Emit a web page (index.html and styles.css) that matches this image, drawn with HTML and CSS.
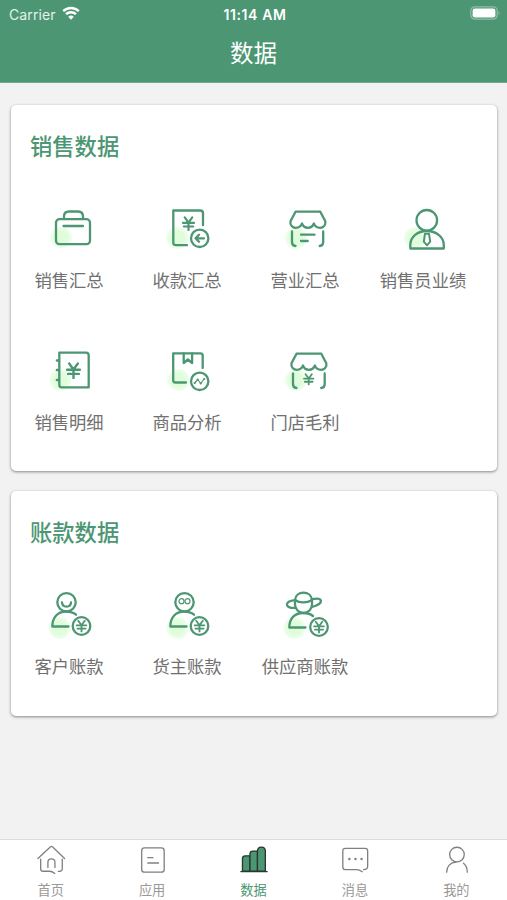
FILE: index.html
```html
<!DOCTYPE html>
<html lang="zh-CN">
<head>
    <meta charset="UTF-8">
    <meta name="viewport" content="width=device-width, initial-scale=1.0">
    <title>数据</title>
    <link rel="stylesheet" href="styles.css">
</head>
<body>
    <svg class="defs" width="0" height="0">
        <defs>
            <radialGradient id="glow">
                <stop offset="0.6" stop-color="#e0fddb"/>
                <stop offset="1" stop-color="#e9fee6" stop-opacity="0.7"/>
            </radialGradient>
            <symbol id="yen" viewBox="0 0 14 16">
                <path d="M3 1.5l4 5.5 4-5.5M1 7.3h12M2 11.2h10M7 7v8"/>
            </symbol>
        </defs>
    </svg>

    <div class="app">
        <header class="header">
            <div class="status-bar">
                <div class="carrier">
                    <span>Carrier</span>
                    <svg class="wifi" viewBox="0 0 18 14">
                        <path d="M1.2 5.2a11.2 11.2 0 0 1 15.6 0M4 8.2a7.2 7.2 0 0 1 10 0"/>
                        <path class="wifi-dot" d="M6.2 10.8a4 4 0 0 1 5.6 0L9 13.7z"/>
                    </svg>
                </div>
                <div class="time">11:14 AM</div>
                <div class="battery-wrap">
                    <svg class="battery" viewBox="0 0 31 14">
                        <rect class="battery-case" x="0.8" y="0.8" width="26.4" height="12.4" rx="4"/>
                        <rect x="2.6" y="2.6" width="22.8" height="8.8" rx="2.2" fill="#fff"/>
                        <path d="M28.6 5q2 2 0 4z" fill="#8fbfa8"/>
                    </svg>
                </div>
            </div>
            <h1 class="title">数据</h1>
        </header>

        <main class="content">
            <section class="card card-sales">
                <h2 class="card-title">销售数据</h2>
                <div class="grid">
                    <div class="item">
                        <svg class="icon" viewBox="0 0 48 48">
                            <circle class="glow" cx="16" cy="32.5" r="11"/>
                            <rect x="11" y="14.2" width="34" height="25" rx="3.5"/>
                            <path d="M19 13.500v-2q0-5 5-5h9q5 0 5 5v2M18.500 21H38"/>
                        </svg>
                        <span>销售汇总</span>
                    </div>
                    <div class="item">
                        <svg class="icon" viewBox="0 0 48 48">
                            <circle class="glow" cx="14.5" cy="33" r="11"/>
                            <path d="M24 40.2H13q-2.700 0-2.700-2.700V5.500h27q2.700 0 2.700 2.700v12"/>
                            <use href="#yen" x="18.500" y="11" width="14" height="15"/>
                            <circle cx="36.700" cy="33.300" r="8.700"/>
                            <path d="M41 33.300h-8.300M36 29.800l-3.500 3.500 3.500 3.500"/>
                        </svg>
                        <span>收款汇总</span>
                    </div>
                    <div class="item">
                        <svg class="icon" viewBox="0 0 48 48">
                            <circle class="glow" cx="15" cy="33" r="11"/>
                            <path d="M14.500 6.700h24.800l5 9.500c.8 4-2.200 6.600-5.200 6.600-3.200 0-5.500-2-6.200-4.300-1 2.600-3.200 4.300-6 4.300s-5-1.700-6-4.300c-.7 2.300-3 4.300-6.200 4.300-3 0-6-2.600-5.200-6.600z"/>
                            <path d="M11 26.500v10.500q0 3.700 3.500 4M42.200 26.500v10.500q0 3.700-3.500 4M20 29.700h13.500M20 36h6.700"/>
                        </svg>
                        <span>营业汇总</span>
                    </div>
                    <div class="item">
                        <svg class="icon" viewBox="0 0 48 48">
                            <circle class="glow" cx="16" cy="33" r="11"/>
                            <circle class="head" cx="27.800" cy="15.300" r="10.300"/>
                            <path d="M11.300 43.500V40c0-8.500 7.500-14 16.500-14s17 5.500 17 14v3.500z"/>
                            <path class="thin" d="M26 28.700h4l1.200 8-3.200 3.600-3.200-3.600z"/>
                        </svg>
                        <span>销售员业绩</span>
                    </div>
                    <div class="item">
                        <svg class="icon" viewBox="0 0 48 48">
                            <circle class="glow" cx="15.500" cy="33" r="11"/>
                            <path d="M14.300 5.700H41q2.700 0 2.700 2.700v32H17q-2.700 0-2.700-2.700zM11.800 13.500h2.500M11.800 23h2.500M11.800 33h2.500"/>
                            <use href="#yen" x="20.500" y="15" width="16" height="17"/>
                        </svg>
                        <span>销售明细</span>
                    </div>
                    <div class="item">
                        <svg class="icon" viewBox="0 0 48 48">
                            <circle class="glow" cx="15.300" cy="33" r="11"/>
                            <path d="M23 35.500H12.500q-2.300 0-2.300-2.300V6.300h27.200q2.300 0 2.300 2.300V21"/>
                            <path d="M20.700 6.500v9.500l4.200-3.500 4.200 3.500V6.500"/>
                            <circle cx="36.700" cy="34.300" r="8.700"/>
                            <path class="fine" d="M31.700 36l3-3.500 3 4 3.500-4.500"/>
                            <path class="fine dots" d="M31.700 36h0M34.700 32.500h0M37.700 36.500h0M41.200 32h0"/>
                        </svg>
                        <span>商品分析</span>
                    </div>
                    <div class="item">
                        <svg class="icon" viewBox="0 0 48 48">
                            <circle class="glow" cx="15" cy="33" r="11"/>
                            <path d="M15.500 6.700h24.800l5 9.500c.8 4-2.200 6.600-5.200 6.600-3.200 0-5.500-2-6.200-4.300-1 2.600-3.200 4.300-6 4.300s-5-1.700-6-4.300c-.7 2.300-3 4.300-6.200 4.300-3 0-6-2.600-5.200-6.600z"/>
                            <path d="M12 26.500v10.500q0 3.700 3.500 4M43.700 26.500v10.500q0 3.700-3.500 4"/>
                            <use href="#yen" x="21.700" y="26" width="12" height="12.500"/>
                        </svg>
                        <span>门店毛利</span>
                    </div>
                </div>
            </section>

            <section class="card card-account">
                <h2 class="card-title">账款数据</h2>
                <div class="grid">
                    <div class="item">
                        <svg class="icon" viewBox="0 0 48 48">
                            <circle class="glow" cx="14.500" cy="37" r="11"/>
                            <circle cx="21.500" cy="11.300" r="9.200"/>
                            <path d="M17 11.500c.5 5.500 8.500 5.500 9 0"/>
                            <path d="M23.500 35.500H7.300c0-9 5.200-14.800 13.700-14.800 4 0 7.500 1 10 3"/>
                            <circle cx="36.500" cy="35" r="8.800"/>
                            <use href="#yen" x="30.500" y="28.500" width="12" height="13"/>
                        </svg>
                        <span>客户账款</span>
                    </div>
                    <div class="item">
                        <svg class="icon" viewBox="0 0 48 48">
                            <circle class="glow" cx="14.500" cy="37" r="11"/>
                            <circle cx="21.500" cy="11.300" r="9.200"/>
                            <circle class="fine" cx="18.500" cy="10.200" r="2.500"/>
                            <circle class="fine" cx="24.500" cy="10.200" r="2.500"/>
                            <path d="M23.500 35.500H7.300c0-9 5.200-14.800 13.700-14.800 4 0 7.500 1 10 3"/>
                            <circle cx="36.500" cy="35" r="8.800"/>
                            <use href="#yen" x="30.500" y="28.500" width="12" height="13"/>
                        </svg>
                        <span>货主账款</span>
                    </div>
                    <div class="item">
                        <svg class="icon" viewBox="0 0 48 48">
                            <circle class="glow" cx="13.500" cy="37" r="11"/>
                            <path d="M14 9c.5-4.700 4-7.300 8.500-7.300s8 2.600 8.500 7.300"/>
                            <path d="M14 9.200c-5 .5-8 2-8 4.300 0 2.500 4 4 8.500 3.200M31 8.200c5-1 8.500-.5 8.900 1.500.4 2.200-3.500 4.800-8.900 6.300"/>
                            <path d="M14 9v4.500a8.500 8.500 0 0 0 17 0V9c-5 3-12 3.500-17 0"/>
                            <path d="M24.500 36.500H8.300c0-9 5.200-14.500 13.700-14.500 4 0 7.500 1 10 3"/>
                            <circle cx="38" cy="36" r="8.800"/>
                            <use href="#yen" x="32" y="29.500" width="12" height="13"/>
                        </svg>
                        <span>供应商账款</span>
                    </div>
                </div>
            </section>
        </main>

        <nav class="tab-bar">
            <div class="tab">
                <svg class="tab-icon" viewBox="0 0 32 32">
                    <path d="M2 14.500L15.500 1.800q1-.8 2 0L30.500 14.500M5 15v10.500q0 2.500 2.500 2.500h7q2.500 0 5.500 2.300M28 15v10.500q0 2.500-4.200 2.700M12.700 24v-5.500c0-5 7.500-5 7.500 0V24"/>
                </svg>
                <span>首页</span>
            </div>
            <div class="tab">
                <svg class="tab-icon" viewBox="0 0 32 32">
                    <rect x="5" y="3" width="24" height="26" rx="3"/>
                    <path d="M11.500 13.500H17M11.500 19.200H23"/>
                </svg>
                <span>应用</span>
            </div>
            <div class="tab active">
                <svg class="tab-icon bars" viewBox="0 0 32 32">
                    <path d="M3.700 28V14.500q0-3 3-3h5V28z"/>
                    <path d="M11.700 28V9.500q0-3 3-3h5V28z"/>
                    <path d="M19.700 28V6.500q0-4.300 4.200-4.300t4.200 4.300V28z"/>
                    <path d="M2 28.300h28"/>
                </svg>
                <span>数据</span>
            </div>
            <div class="tab">
                <svg class="tab-icon" viewBox="0 0 32 32">
                    <path d="M25 26.200q4.500 0 4.500-3.200V6.300q0-2.700-2.700-2.700H5.700Q3 3.600 3 6.300v17.200q0 2.700 2.700 2.700h12q2.800 0 6 2.300"/>
                    <path class="dots" d="M10 15h0M16.500 15h0M23 15h0"/>
                </svg>
                <span>消息</span>
            </div>
            <div class="tab">
                <svg class="tab-icon" viewBox="0 0 32 32">
                    <circle cx="17" cy="10.200" r="7.800"/>
                    <path d="M6 29c0-6 4-10.500 10-10.700M24 19.400c2.500 2 4 5.300 4 9.600"/>
                </svg>
                <span>我的</span>
            </div>
        </nav>
    </div>
</body>
</html>
```
FILE: styles.css
```css
* {
    box-sizing: border-box;
}

body {
    margin: 0;
    font-family: Inter, "Noto Sans CJK SC", sans-serif;
    background: #f2f2f2;
    color: #707070;
}

.defs {
    display: block;
}

.app {
    height: 900px;
    display: flex;
    flex-direction: column;
}

.header {
    height: 83px;
    background: #4c9673;
    border-bottom: 1px solid #76a890;
    color: #fff;
}

.status-bar {
    height: 28px;
    padding: 0 6px 0 9px;
    display: grid;
    grid-template-columns: 1fr auto 1fr;
    align-items: center;
    font-size: 14px;
}

.carrier {
    display: flex;
    align-items: center;
    gap: 6px;
    color: #e3f1ea;
    letter-spacing: 0.1px;
}

.wifi {
    width: 18px;
    height: 14px;
    margin-top: -2px;
    fill: none;
    stroke: #fff;
    stroke-width: 2.4;
}

.wifi .wifi-dot {
    fill: #fff;
    stroke: none;
}

.time {
    font-size: 14px;
    font-weight: 600;
    letter-spacing: 0.6px;
}

.battery-wrap {
    display: flex;
    justify-content: flex-end;
}

.battery {
    width: 31px;
    height: 14px;
    margin-top: -2px;
}

.battery-case {
    fill: none;
    stroke: #8fbfa8;
    stroke-width: 1.2;
}

.title {
    margin: 8px 0 0;
    font-size: 23.5px;
    line-height: 36px;
    font-weight: 400;
    text-align: center;
}

.content {
    flex: 1;
    padding: 22px 10px 0 11px;
}

.card {
    margin-bottom: 20px;
    padding-top: 26px;
    background: #fff;
    border-radius: 5px;
    box-shadow: 0 1px 3px rgba(0, 0, 0, 0.45);
}

.card-sales {
    height: 366px;
}

.card-account {
    height: 225px;
}

.card-title {
    margin: 0 0 0 19px;
    font-size: 22.3px;
    line-height: 32px;
    font-weight: 500;
    color: #4c9673;
}

.grid {
    display: grid;
    grid-template-columns: repeat(4, 118px);
    grid-auto-rows: 142px;
    margin-left: -1px;
    padding-top: 42px;
}

.item {
    display: flex;
    flex-direction: column;
    align-items: center;
    font-size: 17.3px;
    line-height: 26px;
    white-space: nowrap;
}

.icon {
    width: 48px;
    height: 48px;
    margin-bottom: 15px;
    fill: none;
    stroke: #4c9673;
    stroke-width: 2.3;
    stroke-linecap: round;
    stroke-linejoin: round;
    overflow: visible;
}

.icon .glow {
    fill: url(#glow);
    stroke: none;
}

.icon .head {
    fill: #fff;
}

.icon .thin {
    stroke-width: 2;
}

.icon .fine {
    stroke-width: 1.2;
}

.icon .dots {
    stroke-width: 2.2;
}

.tab-bar {
    height: 61px;
    padding-top: 5px;
    display: flex;
    background: #fff;
    border-top: 1px solid #dcdcdc;
}

.tab {
    flex: 1;
    display: flex;
    flex-direction: column;
    align-items: center;
    font-size: 13.2px;
    line-height: 20px;
    color: #999;
}

.tab.active {
    color: #4c9673;
}

.tab-icon {
    width: 32px;
    height: 32px;
    margin-bottom: 5px;
    fill: none;
    stroke: #808080;
    stroke-width: 1.4;
    stroke-linecap: round;
    stroke-linejoin: round;
}

.tab-icon .dots {
    stroke-width: 2.6;
}

.bars {
    fill: #4c9673;
    stroke: #26382f;
}
```
